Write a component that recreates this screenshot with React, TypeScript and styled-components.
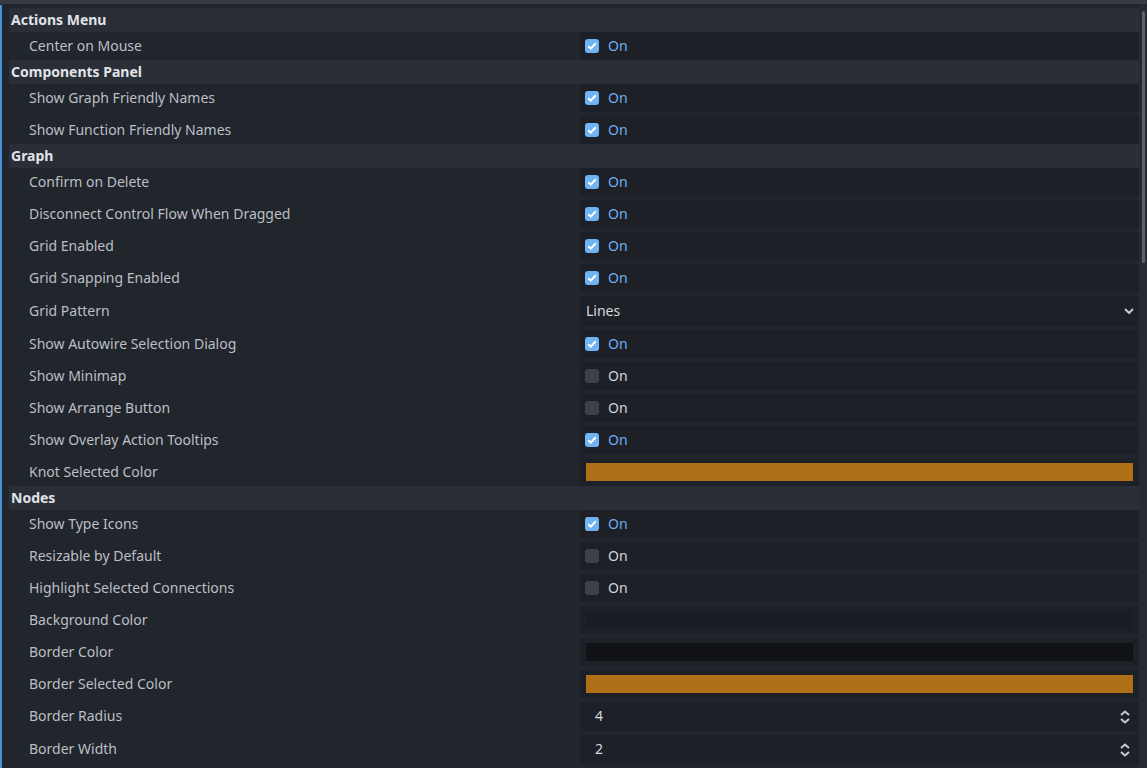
import React from "react";
import styled, { createGlobalStyle } from "styled-components";

const GlobalStyle = createGlobalStyle`
  body {
    margin: 0;
    background: #21252c;
    font-family: "Noto Sans", "Open Sans", sans-serif;
    font-size: 14px;
  }
`;

//整个面板
const Page = styled.div`
  width: 1147px;
  height: 768px;
  overflow: hidden;
  display: flex;
  flex-direction: column;
  background: #21252c;
`;
const TopStrip = styled.div`
  height: 4px;
  background: #353a45;
  flex-shrink: 0;
`;
const Main = styled.div`
  flex: 1;
  display: flex;
  border-left: 2px solid #4a8fd8;
  margin-top: 1px;
`;
const List = styled.div`
  flex: 1;
  padding: 3px 0 0 7px;
  display: flex;
  flex-direction: column;
`;
const ScrollTrack = styled.div`
  width: 8px;
  display: flex;
  justify-content: center;
  background: #262a32;
`;
const ScrollThumb = styled.div`
  width: 3px;
  height: 252px;
  margin-top: 6px;
  border-radius: 2px;
  background: #5b6069;
`;

//分组标题
const Header = styled.div`
  height: 24px;
  display: flex;
  align-items: center;
  padding: 0 0 2px 2px;
  box-sizing: border-box;
  background: #2a2e37;
  color: #e1e3e7;
  font-weight: 700;
`;
const Rows = styled.div`
  display: flex;
  flex-direction: column;
  gap: 4px;
`;
const Row = styled.div<{ $h: number }>`
  display: grid;
  grid-template-columns: 571px 1fr;
  height: ${(p) => p.$h}px;
`;
const Label = styled.div`
  padding: 0 0 2px 20px;
  display: flex;
  align-items: center;
  color: #bcbfc5;
`;
const Value = styled.div`
  background: #1d2027;
  display: flex;
  align-items: center;
`;

//复选框
const CheckWrap = styled.div`
  display: flex;
  align-items: center;
  padding-left: 5px;
`;
const Box = styled.div<{ $on: boolean }>`
  width: 14px;
  height: 14px;
  border-radius: 3px;
  background: ${(p) => (p.$on ? "#6fb3f4" : "#3c4049")};
  display: flex;
  align-items: center;
  justify-content: center;
`;
const OnText = styled.span<{ $on: boolean }>`
  margin-left: 9px;
  color: ${(p) => (p.$on ? "#6eaff0" : "#d2d4d8")};
  padding-bottom: 1px;
`;

const Swatch = styled.div<{ $color: string }>`
  flex: 1;
  height: 18px;
  margin: 0 6px;
  background: ${(p) => p.$color};
`;

const SelectText = styled.span<{ $pad: number }>`
  flex: 1;
  padding-left: ${(p) => p.$pad}px;
  color: #d6d8dc;
  padding-bottom: 2px;
`;
const IconBox = styled.div<{ $right: number }>`
  display: flex;
  align-items: center;
  margin-right: ${(p) => p.$right}px;
`;

type Item =
  | { label: string; kind: "check"; on: boolean }
  | { label: string; kind: "color"; color: string }
  | { label: string; kind: "select"; text: string }
  | { label: string; kind: "spin"; text: string };

const sections: { title: string; items: Item[] }[] = [
  {
    title: "Actions Menu",
    items: [{ label: "Center on Mouse", kind: "check", on: true }],
  },
  {
    title: "Components Panel",
    items: [
      { label: "Show Graph Friendly Names", kind: "check", on: true },
      { label: "Show Function Friendly Names", kind: "check", on: true },
    ],
  },
  {
    title: "Graph",
    items: [
      { label: "Confirm on Delete", kind: "check", on: true },
      { label: "Disconnect Control Flow When Dragged", kind: "check", on: true },
      { label: "Grid Enabled", kind: "check", on: true },
      { label: "Grid Snapping Enabled", kind: "check", on: true },
      { label: "Grid Pattern", kind: "select", text: "Lines" },
      { label: "Show Autowire Selection Dialog", kind: "check", on: true },
      { label: "Show Minimap", kind: "check", on: false },
      { label: "Show Arrange Button", kind: "check", on: false },
      { label: "Show Overlay Action Tooltips", kind: "check", on: true },
      { label: "Knot Selected Color", kind: "color", color: "#ae6f17" },
    ],
  },
  {
    title: "Nodes",
    items: [
      { label: "Show Type Icons", kind: "check", on: true },
      { label: "Resizable by Default", kind: "check", on: false },
      { label: "Highlight Selected Connections", kind: "check", on: false },
      { label: "Background Color", kind: "color", color: "#1a1d23" },
      { label: "Border Color", kind: "color", color: "#111216" },
      { label: "Border Selected Color", kind: "color", color: "#ae6f17" },
      { label: "Border Radius", kind: "spin", text: "4" },
      { label: "Border Width", kind: "spin", text: "2" },
    ],
  },
];

const rowHeight = (it: Item) => (it.kind === "select" ? 30 : it.kind === "spin" ? 29 : 28);

function Tick() {
  return (
    <svg width="10" height="8" viewBox="0 0 10 8">
      <path d="M1.2 4.2 L3.8 6.6 L8.8 1.2" fill="none" stroke="#fff" strokeWidth="2" />
    </svg>
  );
}

function Chevron() {
  return (
    <svg width="10" height="6" viewBox="0 0 10 6">
      <path d="M1 1 L5 5 L9 1" fill="none" stroke="#c8cacd" strokeWidth="2" />
    </svg>
  );
}

function Updown() {
  return (
    <svg width="10" height="14" viewBox="0 0 10 14">
      <path d="M1 5 L5 1.5 L9 5 M1 9 L5 12.5 L9 9" fill="none" stroke="#c8cacd" strokeWidth="2" />
    </svg>
  );
}

function ValueCell({ item }: { item: Item }) {
  if (item.kind === "check") {
    return (
      <Value>
        <CheckWrap>
          <Box $on={item.on}>{item.on && <Tick />}</Box>
          <OnText $on={item.on}>On</OnText>
        </CheckWrap>
      </Value>
    );
  }
  if (item.kind === "color") {
    return (
      <Value>
        <Swatch $color={item.color} />
      </Value>
    );
  }
  if (item.kind === "select") {
    return (
      <Value>
        <SelectText $pad={6}>{item.text}</SelectText>
        <IconBox $right={5}>
          <Chevron />
        </IconBox>
      </Value>
    );
  }
  return (
    <Value>
      <SelectText $pad={15}>{item.text}</SelectText>
      <IconBox $right={9}>
        <Updown />
      </IconBox>
    </Value>
  );
}

function App() {
  return (
    <Page>
      <GlobalStyle />
      <TopStrip />
      <Main>
        <List>
          {sections.map((s) => (
            <div key={s.title}>
              <Header>{s.title}</Header>
              <Rows>
                {s.items.map((it) => (
                  <Row key={it.label} $h={rowHeight(it)}>
                    <Label>{it.label}</Label>
                    <ValueCell item={it} />
                  </Row>
                ))}
              </Rows>
            </div>
          ))}
        </List>
        <ScrollTrack>
          <ScrollThumb />
        </ScrollTrack>
      </Main>
    </Page>
  );
}

export default App;
